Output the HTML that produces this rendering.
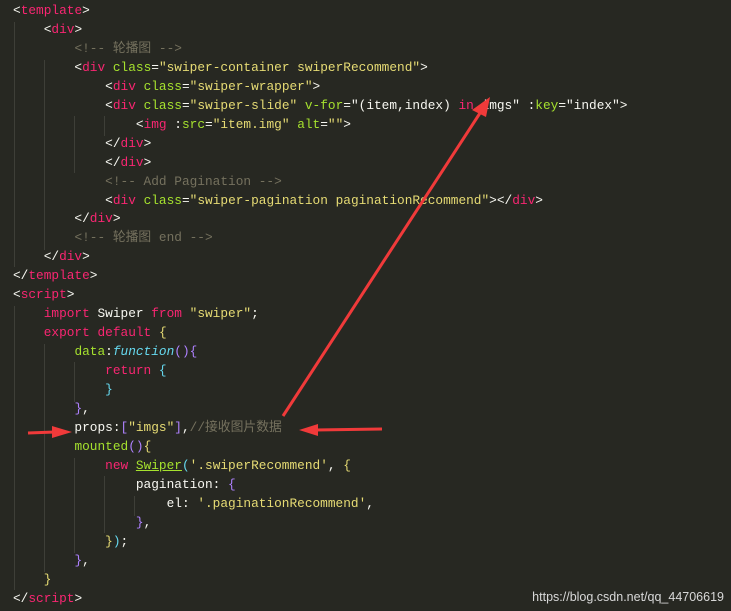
<!DOCTYPE html>
<html><head><meta charset="utf-8"><style>
html,body{margin:0;padding:0;}
body{width:731px;height:611px;background:#272822;overflow:hidden;position:relative;}
pre{margin:0;position:absolute;left:13px;top:2px;font-family:"Liberation Mono","Noto Sans CJK SC",monospace;font-size:12.8px;line-height:18.95px;color:#f8f8f2;}
.t{color:#f92672}.a{color:#a6e22e}.s{color:#e6db74}.c{color:#75715e}.k{color:#f92672}.f{color:#66d9ef;font-style:italic}
.y{color:#e6db74}.p{color:#ae81ff}.b{color:#66d9ef}.u{text-decoration:underline;color:#a6e22e}
.g{position:absolute;width:1px;background:#3e3f38;}
.wm{position:absolute;right:7px;top:590px;font-family:"Liberation Sans",sans-serif;font-size:12.5px;color:#d8d8d8;}
</style></head><body>
<div class="g" style="left:14px;top:22px;height:245px"></div>
<div class="g" style="left:44px;top:60px;height:190px"></div>
<div class="g" style="left:74px;top:116px;height:57px"></div>
<div class="g" style="left:104px;top:116px;height:20px"></div>
<div class="g" style="left:14px;top:306px;height:284px"></div>
<div class="g" style="left:44px;top:344px;height:228px"></div>
<div class="g" style="left:74px;top:362px;height:40px"></div>
<div class="g" style="left:74px;top:458px;height:95px"></div>
<div class="g" style="left:104px;top:476px;height:57px"></div>
<div class="g" style="left:134px;top:496px;height:20px"></div>
<pre>&lt;<span class="t">template</span>&gt;
    &lt;<span class="t">div</span>&gt;
        <span class="c">&lt;!-- 轮播图 --&gt;</span>
        &lt;<span class="t">div</span> <span class="a">class</span>=<span class="s">"swiper-container swiperRecommend"</span>&gt;
            &lt;<span class="t">div</span> <span class="a">class</span>=<span class="s">"swiper-wrapper"</span>&gt;
            &lt;<span class="t">div</span> <span class="a">class</span>=<span class="s">"swiper-slide"</span> <span class="a">v-for</span>="(item,index) <span class="k">in</span> imgs" :<span class="a">key</span>="index"&gt;
                &lt;<span class="t">img</span> :<span class="a">src</span>=<span class="s">"item.img"</span> <span class="a">alt</span>=<span class="s">""</span>&gt;
            &lt;/<span class="t">div</span>&gt;
            &lt;/<span class="t">div</span>&gt;
            <span class="c">&lt;!-- Add Pagination --&gt;</span>
            &lt;<span class="t">div</span> <span class="a">class</span>=<span class="s">"swiper-pagination paginationRecommend"</span>&gt;&lt;/<span class="t">div</span>&gt;
        &lt;/<span class="t">div</span>&gt;
        <span class="c">&lt;!-- 轮播图 end --&gt;</span>
    &lt;/<span class="t">div</span>&gt;
&lt;/<span class="t">template</span>&gt;
&lt;<span class="t">script</span>&gt;
    <span class="k">import</span> Swiper <span class="k">from</span> <span class="s">"swiper"</span>;
    <span class="k">export</span> <span class="k">default</span> <span class="y">{</span>
        <span class="a">data</span>:<span class="f">function</span><span class="p">()</span><span class="p">{</span>
            <span class="k">return</span> <span class="b">{</span>
            <span class="b">}</span>
        <span class="p">}</span>,
        props:<span class="p">[</span><span class="s">"imgs"</span><span class="p">]</span>,<span class="c">//接收图片数据</span>
        <span class="a">mounted</span><span class="p">()</span><span class="y">{</span>
            <span class="k">new</span> <span class="u">Swiper</span><span class="b">(</span><span class="s">'.swiperRecommend'</span>, <span class="y">{</span>
                pagination: <span class="p">{</span>
                    el: <span class="s">'.paginationRecommend'</span>,
                <span class="p">}</span>,
            <span class="y">}</span><span class="b">)</span>;
        <span class="p">}</span>,
    <span class="y">}</span>
&lt;/<span class="t">script</span>&gt;</pre>
<svg width="731" height="611" style="position:absolute;left:0;top:0">
<g fill="#f03a3a" stroke="#f03a3a">
<line x1="283" y1="416" x2="482" y2="110" stroke-width="3"/>
<polygon points="490,97 472,110 486,117" stroke="none"/>
<line x1="28" y1="433" x2="55" y2="432" stroke-width="3"/>
<polygon points="72,432 52,426 52,438" stroke="none"/>
<line x1="382" y1="429" x2="315" y2="430" stroke-width="3"/>
<polygon points="299,430 318,424 318,436" stroke="none"/>
</g></svg>
<div class="wm">https://blog.csdn.net/qq_44706619</div>
</body></html>
